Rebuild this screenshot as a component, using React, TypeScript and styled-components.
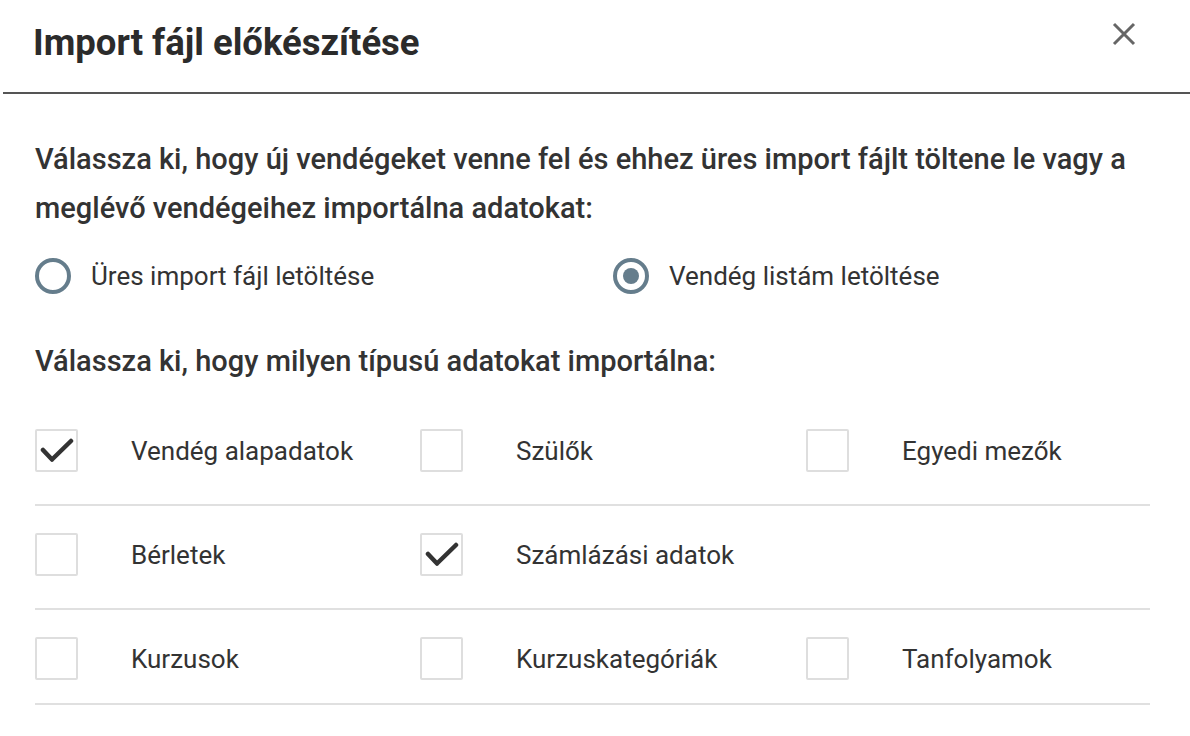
import React from "react";
import styled, { createGlobalStyle } from "styled-components";

const Global = createGlobalStyle`
  html, body { margin: 0; padding: 0; background: #ffffff; }
  body { font-family: Roboto, "Liberation Sans", Arial, sans-serif; color: #333333; }
  * { box-sizing: border-box; }
`;

const Dialog = styled.div`
  width: 1190px;
  height: 736px;
  overflow: hidden;
  background: #fff;
`;

const Header = styled.header`
  display: flex;
  align-items: flex-start;
  justify-content: space-between;
  height: 94px;
  margin-left: 3px;
  padding: 21px 54px 0 30px;
  border-bottom: 2px solid #555555;
`;

const Title = styled.h1`
  margin: 0;
  font-size: 36.5px;
  line-height: 43px;
  font-weight: 700;
  color: #2b2b2b;
  letter-spacing: 0;
`;

const CloseButton = styled.button`
  display: flex;
  width: 24px;
  height: 24px;
  margin-top: 1px;
  padding: 0;
  border: 0;
  background: none;
  cursor: pointer;
`;

const Body = styled.div`
  padding: 41px 40px 0 35px;
`;

const Question = styled.p<{ $mt?: number }>`
  margin: ${(p) => p.$mt ?? 0}px 0 0;
  font-size: 29px;
  line-height: 49px;
  font-weight: 500;
  color: #333;
`;

const RadioGroup = styled.div`
  display: grid;
  grid-template-columns: 578px 1fr;
  margin-top: 25px;
`;

const RadioLabel = styled.label`
  display: flex;
  align-items: center;
  gap: 20px;
  height: 36px;
  font-size: 26px;
  color: #333;
  cursor: pointer;
`;

const RadioCircle = styled.span<{ $checked?: boolean }>`
  position: relative;
  width: 36px;
  height: 36px;
  border-radius: 50%;
  border: 4px solid #657d8c;
  flex-shrink: 0;
  &::after {
    content: "";
    display: ${(p) => (p.$checked ? "block" : "none")};
    position: absolute;
    left: 6px;
    top: 6px;
    width: 16px;
    height: 16px;
    border-radius: 50%;
    background: #657d8c;
  }
`;

const OptionGrid = styled.div`
  margin-top: 16px;
  display: flex;
  flex-direction: column;
`;

const OptionRow = styled.div`
  display: grid;
  grid-template-columns: 385px 386px 1fr;
  padding: 27px 0 32px;
  border-bottom: 2px solid #e0e0e0;
  &:last-child {
    padding-bottom: 23px;
  }
`;

const OptionCell = styled.label`
  display: flex;
  align-items: center;
  gap: 53px;
  font-size: 26px;
  color: #333;
  cursor: pointer;
`;

const Box = styled.span`
  display: flex;
  align-items: center;
  justify-content: center;
  width: 43px;
  height: 43px;
  border: 2px solid #dedede;
  border-radius: 2px;
  flex-shrink: 0;
`;

const CloseIcon = () => (
  <svg width="24" height="24" viewBox="0 0 24 24">
    <path d="M2 2 L22 22 M22 2 L2 22" stroke="#666" strokeWidth="3" strokeLinecap="butt" />
  </svg>
);

const Check = () => (
  <svg width="34" height="26" viewBox="0 0 34 26">
    <path d="M3 12 L12 21.5 L31 3" fill="none" stroke="#333" strokeWidth="4.5" strokeLinecap="round" strokeLinejoin="round" />
  </svg>
);

const Option = ({ label, checked }: { label: string; checked?: boolean }) => (
  <OptionCell>
    <Box>{checked && <Check />}</Box>
    <span>{label}</span>
  </OptionCell>
);

const rows: { label: string; checked?: boolean }[][] = [
  [{ label: "Vendég alapadatok", checked: true }, { label: "Szülők" }, { label: "Egyedi mezők" }],
  [{ label: "Bérletek" }, { label: "Számlázási adatok", checked: true }],
  [{ label: "Kurzusok" }, { label: "Kurzuskategóriák" }, { label: "Tanfolyamok" }],
];

export default function App() {
  return (
    <>
      <Global />
      <Dialog>
        <Header>
          <Title>Import fájl előkészítése</Title>
          <CloseButton aria-label="Bezárás">
            <CloseIcon />
          </CloseButton>
        </Header>
        <Body>
          <Question>
            Válassza ki, hogy új vendégeket venne fel és ehhez üres import fájlt töltene le vagy a meglévő vendégeihez importálna adatokat:
          </Question>
          <RadioGroup>
            <RadioLabel>
              <RadioCircle />
              Üres import fájl letöltése
            </RadioLabel>
            <RadioLabel>
              <RadioCircle $checked />
              Vendég listám letöltése
            </RadioLabel>
          </RadioGroup>
          <Question $mt={43}>Válassza ki, hogy milyen típusú adatokat importálna:</Question>
          <OptionGrid>
            {rows.map((r, i) => (
              <OptionRow key={i}>
                {r.map((o) => (
                  <Option key={o.label} label={o.label} checked={o.checked} />
                ))}
              </OptionRow>
            ))}
          </OptionGrid>
        </Body>
      </Dialog>
    </>
  );
}
